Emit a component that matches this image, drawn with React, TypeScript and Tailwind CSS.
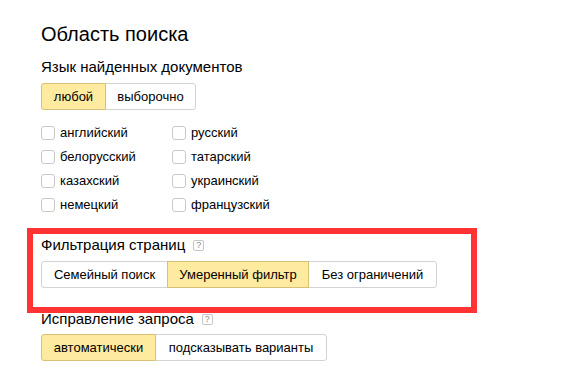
import React from "react";

const font = { fontFamily: '"Liberation Sans", Arial, sans-serif' };

type Seg = { label: string; width: string; active?: boolean };

function SegmentGroup({ items }: { items: Seg[] }) {
  return (
    <div className="flex">
      {items.map((item, i) => (
        <div
          key={item.label}
          className={[
            "flex h-[27px] items-center justify-center border text-[13px] text-black",
            item.width,
            i > 0 ? "-ml-px" : "",
            i === 0 ? "rounded-l-[3px]" : "",
            i === items.length - 1 ? "rounded-r-[3px]" : "",
            item.active ? "relative z-10 border-[#d8c077] bg-[#ffeba0]" : "border-[#d3d3d3] bg-white",
          ].join(" ")}
        >
          {item.label}
        </div>
      ))}
    </div>
  );
}

function Help() {
  return (
    <span className="ml-[8px] inline-flex h-[11px] w-[11px] items-center justify-center rounded-[2px] border border-[#c6c6c6] text-[9px] leading-none text-[#8a8a8a]">
      ?
    </span>
  );
}

function Check({ label }: { label: string }) {
  return (
    <div className="flex h-[24px] items-center">
      <span className="h-[14px] w-[14px] rounded-[3px] border border-[#c9c9c9] bg-white" />
      <span className="ml-[5px] text-[13px] text-black">{label}</span>
    </div>
  );
}

export default function App() {
  const left = ["английский", "белорусский", "казахский", "немецкий"];
  const right = ["русский", "татарский", "украинский", "французский"];

  return (
    <div className="relative h-[391px] w-[585px] overflow-hidden bg-white" style={font}>
      <div className="flex flex-col pl-[41px] pt-[22px]">
        <h1 className="text-[20px] leading-[24px] text-black">Область поиска</h1>

        <div className="mt-[12px] text-[15px] leading-[18px] text-black">Язык найденных документов</div>
        <div className="mt-[7px]">
          <SegmentGroup
            items={[
              { label: "любой", width: "w-[65px]", active: true },
              { label: "выборочно", width: "w-[91px]" },
            ]}
          />
        </div>

        <div className="mt-[11px] flex">
          <div className="flex w-[131px] flex-col">
            {left.map((l) => (
              <Check key={l} label={l} />
            ))}
          </div>
          <div className="flex flex-col">
            {right.map((l) => (
              <Check key={l} label={l} />
            ))}
          </div>
        </div>

        <div className="mt-[19px] flex items-center text-[15px] leading-[18px] text-black">
          Фильтрация страниц
          <Help />
        </div>
        <div className="mt-[7px]">
          <SegmentGroup
            items={[
              { label: "Семейный поиск", width: "w-[127px]" },
              { label: "Умеренный фильтр", width: "w-[142px]", active: true },
              { label: "Без ограничений", width: "w-[129px]" },
            ]}
          />
        </div>

        <div className="mt-[22px] flex items-center text-[15px] leading-[18px] text-black">
          Исправление запроса
          <Help />
        </div>
        <div className="mt-[6px]">
          <SegmentGroup
            items={[
              { label: "автоматически", width: "w-[115px]", active: true },
              { label: "подсказывать варианты", width: "w-[172px]" },
            ]}
          />
        </div>
      </div>

      <div className="absolute left-[27px] top-[228px] h-[85px] w-[450px] border-[6px] border-[#ff3333]" />
    </div>
  );
}
